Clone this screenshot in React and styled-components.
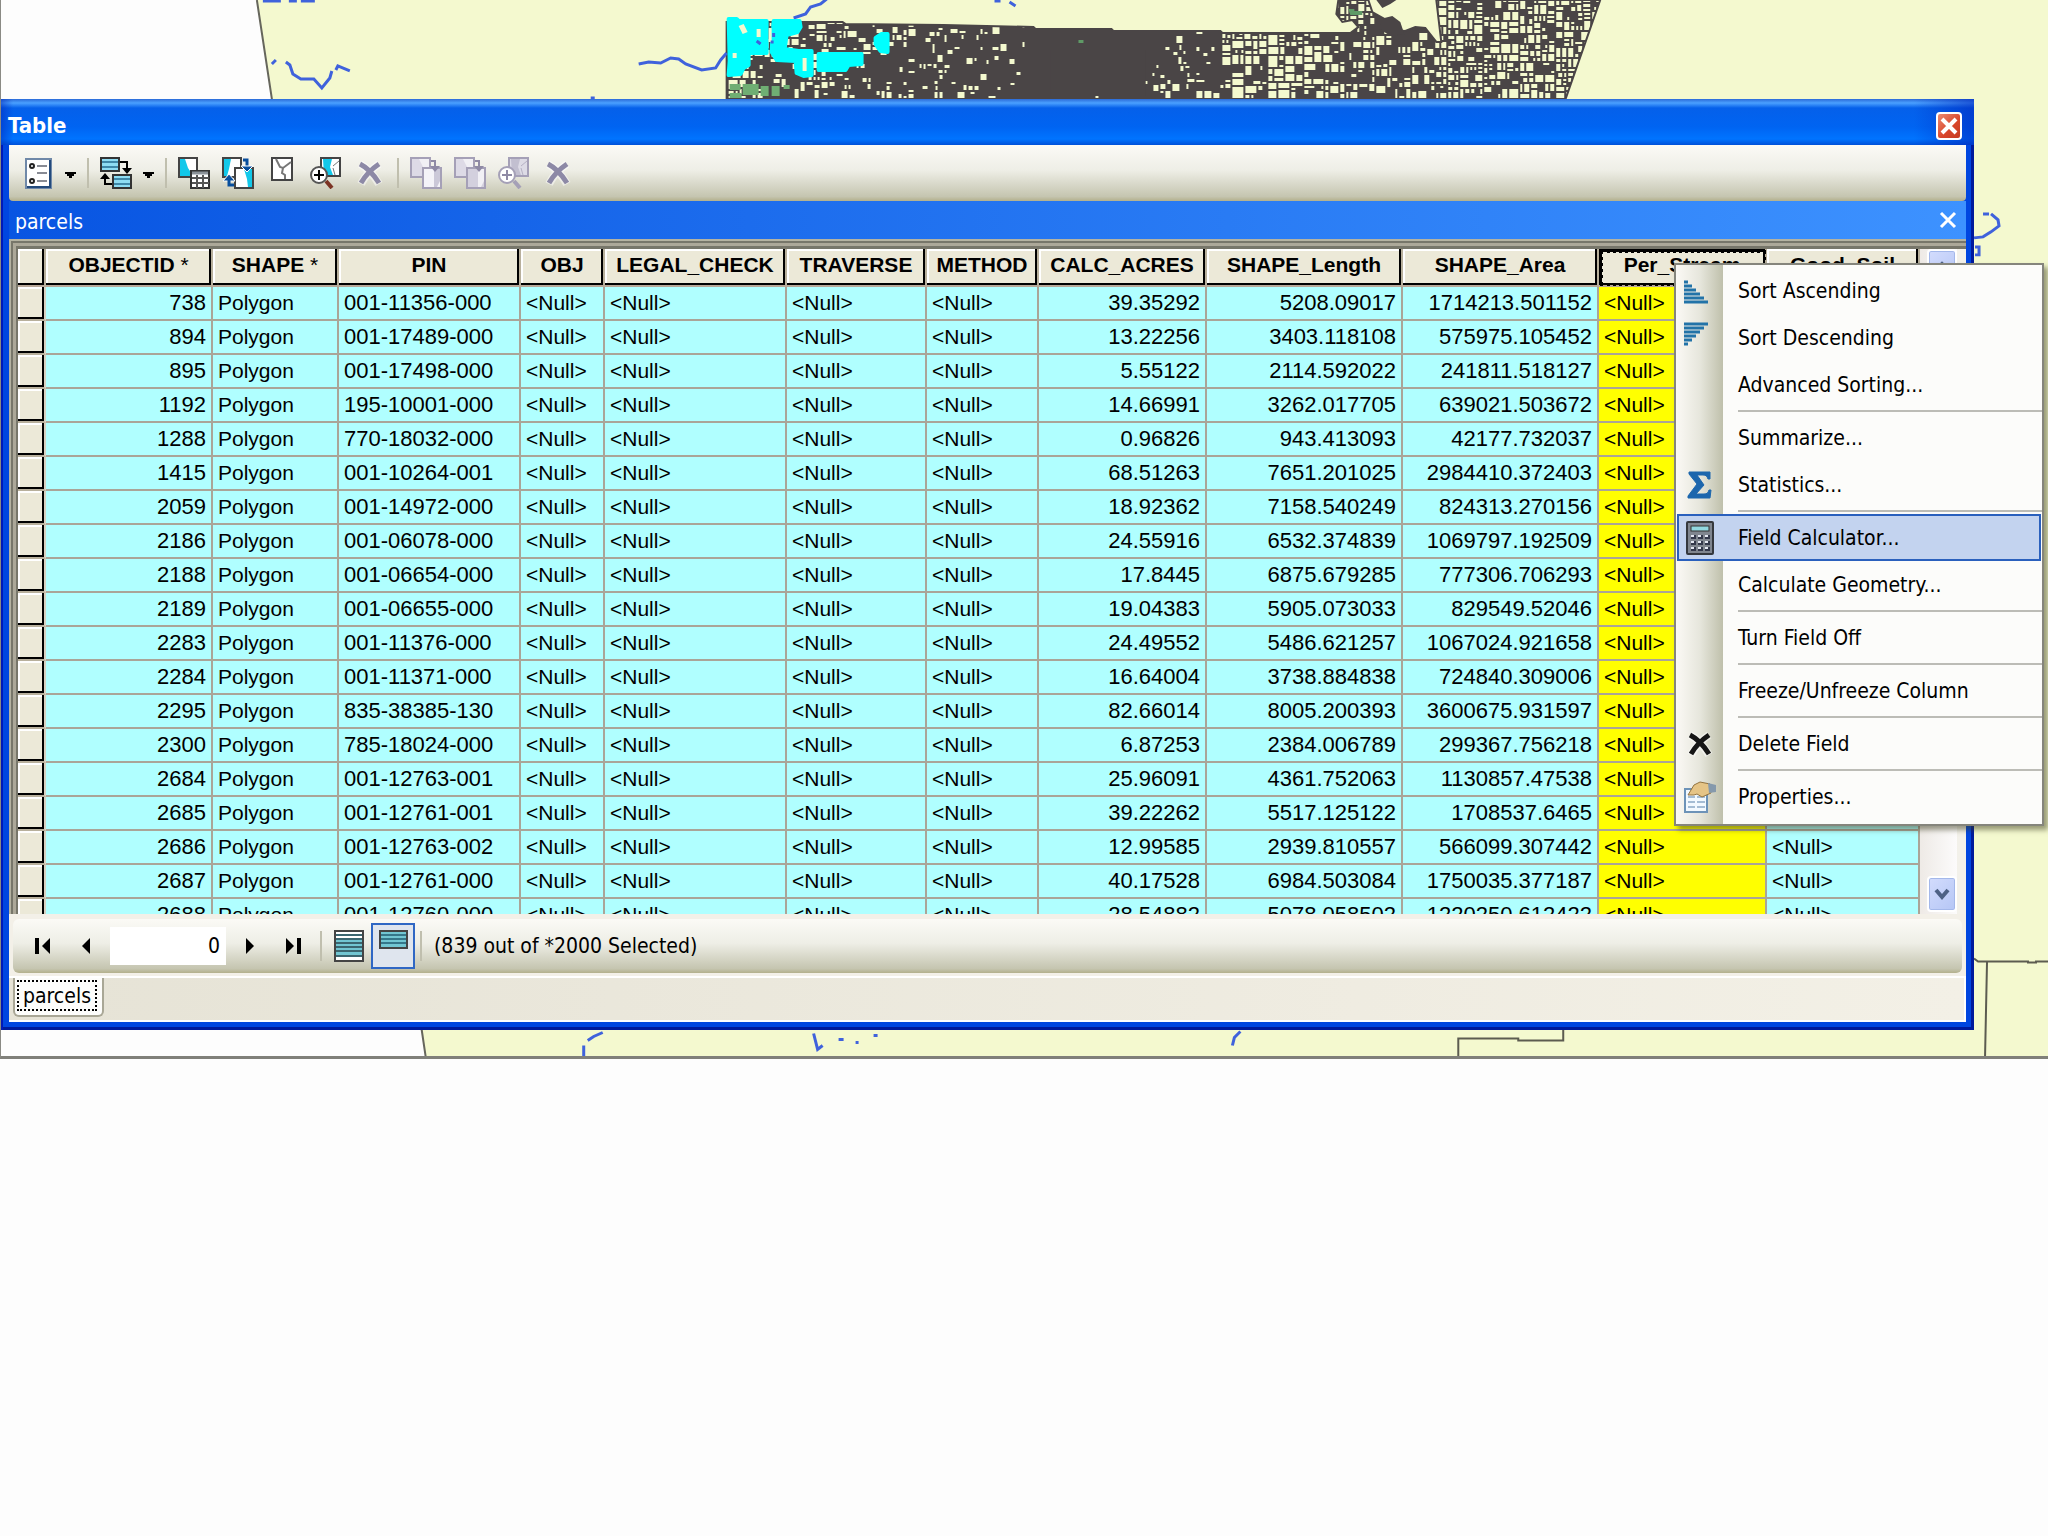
// src/App.jsx

import React from 'react';
import styled, { createGlobalStyle, css } from 'styled-components';

const uiFont = "'DejaVu Sans Condensed', 'Noto Sans', sans-serif";
const gridFont = "'Liberation Sans', Arial, sans-serif";

const GlobalStyle = createGlobalStyle`
  * { box-sizing: border-box; }
  body {
    margin: 0;
    background: #fdfdfd;
    color: #000;
    font-family: ${uiFont};
    font-size: 21px;
  }
  button, input {
    font: inherit;
    color: inherit;
  }
`;

/**
 * Map view behind the floating table window
 */
const MapView = styled.main`
  position: relative;
  overflow: hidden;
  padding: 99px 74px 26px 0;
  border-left: 1px solid #8a8a84;
  border-bottom: 3px solid #80807a;
`;

const MapDrawing = styled.svg`
  position: absolute;
  top: 0;
  left: 0;
  width: 100%;
  height: 100%;
`;

/**
 * Floating window
 */
const Window = styled.section`
  position: relative;
  padding: 0 8px 8px 8px;
  background: #0046e0;
  box-shadow: inset 2px 0 0 #0019b8, inset -3px -3px 0 #001a9c;
`;

const TitleBar = styled.header`
  display: flex;
  align-items: center;
  justify-content: space-between;
  height: 46px;
  margin: 0 -8px;
  padding: 7px 12px 0 7px;
  background:
    linear-gradient(90deg, rgba(0, 40, 190, 0.5), transparent 12px calc(100% - 60px), rgba(0, 40, 190, 0.6)),
    linear-gradient(#2b6ad8 0, #4aa0ff 4px, #0560ea 9px, #0064f2 28px, #0074ff 40px, #0050d8 46px);
`;

const Title = styled.h1`
  margin: 0;
  color: #fff;
  font-size: 22px;
  line-height: 28px;
`;

const CloseButton = styled.button`
  display: flex;
  width: 26px;
  height: 28px;
  padding: 0;
  align-items: center;
  justify-content: center;
  border: 2px solid #fff;
  border-radius: 4px;
  background: linear-gradient(135deg, #ec8a70, #d8452a 60%, #c53b20);
`;

const barBackground = css`
  background: linear-gradient(#fbfaf6, #eeeee6 45%, #c5c5b0 92%, #b3b08c);
`;

const Toolbar = styled.div`
  display: flex;
  align-items: center;
  height: 56px;
  padding: 0 7px;
  border-radius: 0 0 4px 4px;
  ${barBackground}
`;

const ToolButton = styled.button`
  display: flex;
  width: 44px;
  height: 46px;
  padding: 0;
  align-items: center;
  justify-content: center;
  border: 2px solid ${({ $active }) => ($active ? '#2f67c4' : 'transparent')};
  background: ${({ $active }) => ($active ? '#dfe5ee' : 'transparent')};
`;

const CaretButton = styled(ToolButton)`
  width: 22px;
  padding-right: 3px;
`;

const Separator = styled.span`
  width: 2px;
  height: 30px;
  margin: 0 5px;
  background: #c0bfae;
`;

/**
 * Name strip of the open table
 */
const LayerBar = styled.div`
  display: flex;
  height: 38px;
  padding: 3px 8px 0 6px;
  align-items: center;
  justify-content: space-between;
  background: linear-gradient(90deg, #0855e2, #3d92ff);
`;

const LayerName = styled.h2`
  margin: 0;
  color: #fff;
  font-size: 21px;
  font-weight: 400;
`;

const PlainButton = styled.button`
  display: flex;
  padding: 0 0 4px;
  border: 0;
  background: none;
`;

/**
 * Attribute grid
 */
const GridFrame = styled.div`
  display: flex;
  height: 675px;
  padding: 10px 9px 0 9px;
  background: #f3f1ea;
  box-shadow:
    inset 2px 2px 0 #b5b3a2,
    inset 4px 4px 0 #77766a,
    inset 7px 7px 0 #aca899,
    inset 9px 10px 0 #77766a;
`;

const GridViewport = styled.div`
  flex: 1;
  overflow: hidden;
`;

const Grid = styled.table`
  width: 100%;
  table-layout: fixed;
  border-collapse: separate;
  border-spacing: 0;
  font-family: ${gridFont};
  font-size: 21px;
`;

const Column = styled.col`
  width: ${({ $width }) => ($width ? `${$width}px` : 'auto')};
`;

const HeaderCell = styled.th`
  height: 38px;
  padding: 0 4px 5px;
  border-right: 2px solid #b8b09c;
  border-bottom: 2px solid #b8a898;
  background: #ece9d8;
  box-shadow: inset -2px -2px 0 #000, inset 2px 2px 0 #fff;
  line-height: 24px;
  text-align: center;
  white-space: nowrap;
  ${({ $current }) =>
    $current &&
    css`
      outline: 3px dotted #000;
      outline-offset: -4px;
      box-shadow: inset -2px -2px 0 #000, inset 3px 3px 0 #000;
    `}
`;

const Star = styled.span`
  font-weight: 400;
`;

const RowHandle = styled.th`
  height: 34px;
  border-right: 2px solid #d8d2c2;
  border-bottom: 2px solid #b8b09c;
  background: #ece9d8;
  box-shadow: inset -2px -2px 0 #000, inset 2px 2px 0 #fff;
`;

const Cell = styled.td`
  height: 34px;
  padding: 0 5px 1px;
  border-right: 2px solid #aaa598;
  border-bottom: 2px solid #aaa598;
  background: ${({ $current }) => ($current ? '#ffff00' : '#b0ffff')};
  font-size: ${({ $digits }) => ($digits ? 22 : 21)}px;
  line-height: 26px;
  text-align: ${({ $align }) => $align || 'left'};
  white-space: nowrap;
`;

const Scrollbar = styled.div`
  display: flex;
  width: 37px;
  padding: 0 0 2px 7px;
  flex-direction: column;
  justify-content: space-between;
  background: linear-gradient(90deg, #eeeae6, #fcfbfb);
`;

const ScrollButton = styled.button`
  display: flex;
  width: 30px;
  height: 36px;
  padding: 0;
  align-items: center;
  justify-content: center;
  border: 2px solid #fff;
  border-radius: 4px;
  background: linear-gradient(135deg, #d3dcfd, #b5c6f5);
  box-shadow: inset 0 0 0 1px #a4b8ea;
`;

/**
 * Record navigation under the grid
 */
const StatusBar = styled.footer`
  display: flex;
  height: 62px;
  padding: 5px 4px 3px;
  background: #f3f0e8;
`;

const StatusTools = styled.div`
  display: flex;
  flex: 1;
  padding: 0 8px;
  align-items: center;
  border-radius: 6px;
  ${barBackground}
`;

const RecordInput = styled.input`
  width: 116px;
  height: 38px;
  margin: 0 1px;
  padding: 0 6px;
  border: 0;
  background: #fff;
  text-align: right;
`;

const SelectionCount = styled.p`
  margin: 0 7px;
`;

const TabStrip = styled.nav`
  height: 46px;
  padding: 0 4px;
  border-top: 2px solid #fff;
  border-right: 2px solid #fff;
  border-bottom: 2px solid #fff;
  background: linear-gradient(90deg, #e6e3d6, #f3f0e6);
`;

const Tab = styled.button`
  height: 39px;
  padding: 1px 5px 3px 2px;
  border: 2px solid #a9a796;
  border-top: 0;
  border-radius: 0 0 6px 6px;
  background: #fdfdfb;
`;

const TabLabel = styled.span`
  display: block;
  height: 31px;
  padding: 0 4px;
  border: 2px dotted #000;
  line-height: 29px;
`;

/**
 * Column context menu, lies over the grid
 */
const Menu = styled.ul`
  position: absolute;
  top: 263px;
  right: 4px;
  width: 370px;
  margin: 0;
  padding: 2px 1px 4px;
  border: 2px solid #85857c;
  background: linear-gradient(90deg, #fbf9f5, #e6e6dc 24px, #bfc0ab 47px, #fcfcfa 47px);
  box-shadow: 4px 4px 5px rgba(60, 60, 30, 0.5);
  list-style: none;
`;

const MenuItem = styled.button`
  display: flex;
  width: 100%;
  height: 47px;
  padding: 0;
  align-items: center;
  border: 2px solid ${({ $active }) => ($active ? '#2a60bd' : 'transparent')};
  background: ${({ $active }) => ($active ? '#c3d3ef' : 'transparent')};
  text-align: left;
`;

const MenuIcon = styled.span`
  display: flex;
  width: 42px;
  margin-right: 17px;
  justify-content: center;
`;

const MenuLine = styled.li`
  height: 2px;
  margin: 2px -1px 2px 61px;
  background: #bcbcb6;
`;

const Icon = ({ children, size = 32 }) => (
  <svg width={size} height={size} viewBox={`0 0 ${size} ${size}`} fill="none" aria-hidden="true">
    {children}
  </svg>
);

const CaretIcon = () => (
  <Icon size={14}>
    <path d="M2 6h11v2h-2v2H9v2H6v-2H4V8H2z" fill="#000" />
  </Icon>
);

const ListIcon = () => (
  <Icon>
    <path d="M4 2h25v29H4z" fill="#fff" stroke="#6f88a8" strokeWidth="2" />
    <path d="M28 3v27H5" stroke="#234a7c" strokeWidth="2" />
    <circle cx="10" cy="9" r="2" stroke="#222" strokeWidth="2" />
    <circle cx="10" cy="24" r="2" stroke="#222" strokeWidth="2" />
    <path d="M15 9h10M15 16h10M15 24h10" stroke="#888b94" strokeWidth="2" />
  </Icon>
);

const RelatedIcon = () => (
  <Icon>
    {[[1, 1], [13, 18]].map(([x, y]) => (
      <g key={x}>
        <path d={`M${x} ${y}h18v13H${x}z`} fill="#8edcf2" stroke="#333" strokeWidth="2" />
        <path d={`M${x + 1} ${y + 4}h16M${x + 1} ${y + 9}h16`} stroke="#3f88a8" strokeWidth="2" />
      </g>
    ))}
    <path d="M20 5h7v7M5 20v7h7" stroke="#000" strokeWidth="2" />
    <path d="M22 11h10l-5 6zM0 22h10l-5-6z" fill="#000" />
  </Icon>
);

const SelectByIcon = () => (
  <Icon>
    <path d="M1 1h18v19H1z" fill="#fff" stroke="#444" strokeWidth="2" />
    <path d="M2 2h5l3 9 2 3v5H2z" fill="#12c8ea" />
    <path d="M13 14h18v17H13z" fill="#fff" stroke="#333" strokeWidth="2" />
    <path d="M14 16h16" stroke="#8b9299" strokeWidth="3" />
    <path d="M14 21h17M14 26h17M19 18v13M25 18v13" stroke="#555" strokeWidth="2" />
  </Icon>
);

const SwitchSelectionIcon = () => (
  <Icon>
    <path d="M1 1h18v19H1z" fill="#fff" stroke="#444" strokeWidth="2" />
    <path d="M2 2h7l-2 10-2 7H2z" fill="#12c8ea" />
    <path d="M13 11h18v20H13z" fill="#fff" stroke="#444" strokeWidth="2" />
    <path d="M22 12h8v18h-4l-1-8z" fill="#12c8ea" />
    <path d="M21 3h4v6" stroke="#084e9d" strokeWidth="3" />
    <path d="M19 9h12l-6 6z" fill="#084e9d" stroke="#fff" />
    <path d="M1 24l6-7 6 7z" fill="#084e9d" stroke="#fff" />
    <path d="M7 22v6h5" stroke="#084e9d" strokeWidth="3" />
  </Icon>
);

const HighlightIcon = ({ shaded }) => (
  <Icon>
    <path d="M1 1h19v19H1z" fill="#dddae6" stroke="#a5a0b7" strokeWidth="2" />
    <path d="M9 2h10v8h-6z" fill="#f1f0f5" />
    <path d="M13 11h18v20H13z" fill={shaded ? '#d3d0de' : '#f4f3f8'} stroke="#a5a0b7" strokeWidth="2" />
    <path d="M24 12h6v12l-3 6h-3z" fill={shaded ? '#f1f0f5' : '#cbc8d8'} />
    <path d="M21 4h4v6" stroke="#8f8aa5" strokeWidth="2" />
    <path d="M20 9h10l-5 6z" fill="#8f8aa5" />
  </Icon>
);

const ClearIcon = () => (
  <Icon>
    <path d="M6 1h20v22H6z" fill="#fff" stroke="#444" strokeWidth="2" />
    <path d="M10 2l4 8 3 1 8-6M17 11l-1 5 3 2v4" stroke="#777" strokeWidth="2" />
  </Icon>
);

const ZoomIcon = ({ disabled }) => (
  <Icon>
    <path d="M11 1h19v18H11z" fill={disabled ? '#dddbe6' : '#fff'} stroke={disabled ? '#a5a0b7' : '#444'} strokeWidth="2" />
    <path d="M13 2h9l-2 8 3 8h-9z" fill={disabled ? '#c2bfd0' : '#12c8ea'} />
    <path d="M23 9l6-5M25 18l-2-7" stroke={disabled ? '#b5b1c4' : '#777'} />
    <path d="M16 24l6 7" stroke={disabled ? '#a5a0b7' : '#7c3324'} strokeWidth="4" />
    <circle cx="9" cy="18" r="8" fill="#fff" stroke={disabled ? '#a5a0b7' : '#555'} strokeWidth="2" />
    <path d="M4 18h10M9 13v10" stroke={disabled ? '#8f8aa5' : '#000'} strokeWidth="2" />
  </Icon>
);

const CrossIcon = ({ color }) => (
  <Icon>
    <path d="M6 7c6 3 14 11 19 20M25 7C19 11 11 19 7 27" stroke="#fff" strokeWidth="8" opacity="0.5" />
    <path d="M6 7c6 3 14 11 19 19M25 7C19 11 11 19 7 26" stroke={color} strokeWidth="5" />
  </Icon>
);

const CloseIcon = ({ size = 20, width = 4 }) => (
  <Icon size={size}>
    <path d={`M3 3L${size - 3} ${size - 3}M${size - 3} 3L3 ${size - 3}`} stroke="#fff" strokeWidth={width} />
  </Icon>
);

const StepIcon = ({ end, back }) => (
  <Icon>
    <g transform={back ? 'matrix(-1 0 0 1 32 0)' : undefined}>
      <path d={end ? 'M9 8v16l8-8z' : 'M13 8v16l8-8z'} fill="#000" />
      {end && <path d="M20 8h4v16h-4z" fill="#000" />}
    </g>
  </Icon>
);

const AllRecordsIcon = () => (
  <Icon>
    <path d="M2 1h28v30H2z" fill="#fff" stroke="#444" strokeWidth="2" />
    <path d="M3 9h26v17H3z" fill="#72c6d2" />
    <path d="M3 5h26M3 9h26M3 13h26M3 17h26M3 21h26M3 26h26" stroke="#3b6670" strokeWidth="2" />
  </Icon>
);

const SelectedRecordsIcon = () => (
  <Icon>
    <path d="M3 1h27v17H3z" fill="#72c6d2" stroke="#444" strokeWidth="2" />
    <path d="M4 5h25M4 9h25M4 13h25" stroke="#35778a" strokeWidth="2" />
  </Icon>
);

const SortIcon = ({ descending }) => (
  <Icon>
    {[4, 8, 12, 16, 20, 24].map((w, i) => (
      <path key={w} d={`M0 ${descending ? 22 - i * 4 : 7 + i * 4}h${w}`} stroke="#2273a8" strokeWidth="3" />
    ))}
  </Icon>
);

const SigmaIcon = () => (
  <Icon>
    <path d="M5 3h21v7h-2c-1-3-2-4-5-4h-6l7 10-8 9h8c3 0 4-1 5-4h2l-1 8H4v-2l9-12L5 5z" fill="#1c66ad" stroke="#1c66ad" />
  </Icon>
);

const CalculatorIcon = () => (
  <svg width="30" height="36" viewBox="0 0 30 36" aria-hidden="true">
    <rect x="2" y="2" width="26" height="32" rx="1" fill="#80868f" stroke="#35383d" strokeWidth="2" />
    <rect x="6" y="6" width="18" height="5" fill="#92d8e0" stroke="#333" />
    {[0, 1, 2].map((row) =>
      [0, 1, 2].map((col) => (
        <g key={`${row}${col}`}>
          <rect x={6 + col * 7} y={15 + row * 6} width="5" height="4" fill="#33384a" />
          <rect x={6 + col * 7} y={15 + row * 6} width="3" height="2" fill="#e4e8f2" />
        </g>
      ))
    )}
  </svg>
);

const PropertiesIcon = () => (
  <Icon>
    <path d="M1 8h22v23H1z" fill="#f2f9ff" stroke="#6d93b8" strokeWidth="2" />
    <path d="M4 16h7M13 16h8M4 21h7M13 21h8M4 26h7M13 26h8" stroke="#a4bcd4" strokeWidth="2" />
    <path d="M4 14L10 4l6-3 10 2 1 9-9 4-5-3-3 1z" fill="#e5c486" stroke="#93733f" />
    <path d="M24 2l8 2v7l-7 1z" fill="#8599ac" />
  </Icon>
);

/**
 * Parcel fabric: the area is split again and again into lots,
 * dense blocks stay dark, open ones show the land colour
 */
const lotStyle = (x) => {
  if (x < 850) return { open: 0.55, size: 6 };
  if (x < 950) return { open: 0.4, size: 5 };
  if (x < 1030) return { open: 0.22, size: 5 };
  if (x < 1150) return { open: 0.04, size: 4 };
  if (x < 1220) return { open: 0.3, size: 5 };
  if (x < 1330) return { open: 0.75, size: 7 };
  if (x < 1430) return { open: 0.6, size: 6 };
  return { open: 0.88, size: 6 };
};

const buildLots = () => {
  let seed = 20117;
  const random = () => {
    seed = (seed * 16807) % 2147483647;
    return seed / 2147483647;
  };
  const lots = [];
  const split = (x, y, w, h) => {
    const { open, size } = lotStyle(x);
    const small = w < size * 2 && h < size * 2;
    if ((small && random() < 0.6) || w < 5 || h < 5) {
      if (random() < open && w > 3 && h > 3) lots.push(`M${x} ${y}h${w - 2}v${h - 2}h${2 - w}z`);
      return;
    }
    const cut = 0.3 + random() * 0.4;
    if (w > h) {
      const left = Math.round(w * cut);
      split(x, y, left, h);
      split(x + left, y, w - left, h);
    } else {
      const top = Math.round(h * cut);
      split(x, y, w, top);
      split(x, y + top, w, h - top);
    }
  };
  for (let x = 728; x < 1610; x += 36) split(x, 0, 36, 100);
  return lots.join('');
};

const lotsPath = buildLots();
const parcelOutline =
  '726,22 842,22 845,24 943,25 1033,27 1035,29 1111,29 1113,31 1220,31 1222,33 1350,33 1358,27 1352,20 1342,22 1336,14 1338,0 1368,0 1372,12 1386,20 1391,30 1405,31 1415,27 1425,28 1436,42 1441,42 1436,0 1600,0 1565,100 726,100';

const Backdrop = () => (
  <MapDrawing viewBox="0 0 2048 1058" preserveAspectRatio="xMinYMin slice" aria-hidden="true">
    <clipPath id="parcels">
      <polygon points={parcelOutline} />
    </clipPath>
    <path d="M256 0L271 99 421 1031 425 1058H2048V0z" fill="#f4f9cf" />
    <path d="M256 0L271 99 421 1031 425 1058" stroke="#66665c" strokeWidth="2" fill="none" />
    <polygon points={parcelOutline} fill="#4a4546" />
    <path d={lotsPath} fill="#f4f9cf" clipPath="url(#parcels)" />
    <polygon points={parcelOutline} fill="none" stroke="#4a4546" strokeWidth="2" />
    <path d="M1376 0l6 8 8-4 6-4M1384 18l8-2 8 6 4 12-14 2-12-8z" fill="#4a4546" />
    <path d="M1050 50h95v46h-95z" fill="#4a4546" />
    <path d="M729 84h11v6h-11zM742 84h16v11h-16zM760 86h8v10h-8zM729 93h12v5h-12zM771 86h8v10h-8zM783 85h6v4h-6z" fill="#6fae73" />
    <path d="M1348 9h6v2h8v4h-12zM1078 40h5v3h-5z" fill="#5f9a66" />
    <g fill="none" stroke="#3f62dc" strokeWidth="3">
      <path d="M271 64l4-4M285 62l4 3 3 9 8 5h13l8 9 8-10 2-7M335 70l2-4 12 5" />
      <path d="M638 64l10-2 12 1 10-5 8 1 7 5 16 6 14-2 5-8 6-7M793 18l12-4 5-7 10-3 6-5M262 1h18M288 1h8M300 1h14M994 1h6M1009 2l6 4M590 98h4" />
      <path d="M1974 238l9-1 8-5 8-6-1-6-7-6M1983 214h6M1975 247h4v8h-4" />
      <path d="M583 1058v-12M587 1041l6-4 9-4M813 1034l4 16 5-4M838 1040h5M855 1043h3M873 1036h4M1232 1046l2-8 6-6" />
    </g>
    <g fill="#00ffff" stroke="#00ffff" strokeWidth="4" strokeLinejoin="round">
      <path d="M728 19h8l2 2h28v32h-18v12l-5 3-3 6-12 1 1-14z" />
      <path d="M773 21h26l1 6-3 5-11 3-2 14 14 2h13v24l-8 1-7-3-1-12-19-1-5-8z" />
      <path d="M818 54h43v10l-13 1-3 5h-27zM875 38l6-4h6v18l-7-1-5-7z" />
    </g>
    <path d="M738 26l5-2 4 8-5 2zM756 29h4v8h-4zM732 53h4v5h-4zM802 58h4v13h-4zM768 28h3v14h-3z" fill="#f4f9cf" />
    <path d="M756 41l4 3M770 42h3M773 33v4" stroke="#3f62dc" strokeWidth="3" />
    <g fill="none" stroke="#5c5c50" strokeWidth="2">
      <path d="M1974 959l4 3h50v1h8v-1h12M1987 962l-2 96M1458 1058v-19h60v2h45v-12" />
    </g>
  </MapDrawing>
);

const columns = [
  { name: 'OBJECTID', star: true, width: 167, align: 'right', digits: true },
  { name: 'SHAPE', star: true, width: 126 },
  { name: 'PIN', width: 182, digits: true },
  { name: 'OBJ', width: 84 },
  { name: 'LEGAL_CHECK', width: 182 },
  { name: 'TRAVERSE', width: 140 },
  { name: 'METHOD', width: 112 },
  { name: 'CALC_ACRES', width: 168, align: 'right', digits: true },
  { name: 'SHAPE_Length', width: 196, align: 'right', digits: true },
  { name: 'SHAPE_Area', width: 196, align: 'right', digits: true },
  { name: 'Per_Stream', width: 168, current: true },
  { name: 'Good_Soil' },
];

const parcels = [
  ['738', '001-11356-000', '39.35292', '5208.09017', '1714213.501152'],
  ['894', '001-17489-000', '13.22256', '3403.118108', '575975.105452'],
  ['895', '001-17498-000', '5.55122', '2114.592022', '241811.518127'],
  ['1192', '195-10001-000', '14.66991', '3262.017705', '639021.503672'],
  ['1288', '770-18032-000', '0.96826', '943.413093', '42177.732037'],
  ['1415', '001-10264-001', '68.51263', '7651.201025', '2984410.372403'],
  ['2059', '001-14972-000', '18.92362', '7158.540249', '824313.270156'],
  ['2186', '001-06078-000', '24.55916', '6532.374839', '1069797.192509'],
  ['2188', '001-06654-000', '17.8445', '6875.679285', '777306.706293'],
  ['2189', '001-06655-000', '19.04383', '5905.073033', '829549.52046'],
  ['2283', '001-11376-000', '24.49552', '5486.621257', '1067024.921658'],
  ['2284', '001-11371-000', '16.64004', '3738.884838', '724840.309006'],
  ['2295', '835-38385-130', '82.66014', '8005.200393', '3600675.931597'],
  ['2300', '785-18024-000', '6.87253', '2384.006789', '299367.756218'],
  ['2684', '001-12763-001', '25.96091', '4361.752063', '1130857.47538'],
  ['2685', '001-12761-001', '39.22262', '5517.125122', '1708537.6465'],
  ['2686', '001-12763-002', '12.99585', '2939.810557', '566099.307442'],
  ['2687', '001-12761-000', '40.17528', '6984.503084', '1750035.377187'],
  ['2688', '001-12760-000', '28.54882', '5078.058502', '1220250.612422'],
];

const toCells = ([id, pin, acres, length, area]) => [
  id, 'Polygon', pin, '<Null>', '<Null>', '<Null>', '<Null>', acres, length, area, '<Null>', '<Null>',
];

const menuItems = [
  { label: 'Sort Ascending', icon: <SortIcon /> },
  { label: 'Sort Descending', icon: <SortIcon descending /> },
  { label: 'Advanced Sorting...', lineAfter: true },
  { label: 'Summarize...' },
  { label: 'Statistics...', icon: <SigmaIcon />, lineAfter: true },
  { label: 'Field Calculator...', icon: <CalculatorIcon />, active: true },
  { label: 'Calculate Geometry...', lineAfter: true },
  { label: 'Turn Field Off', lineAfter: true },
  { label: 'Freeze/Unfreeze Column', lineAfter: true },
  { label: 'Delete Field', icon: <CrossIcon color="#151515" />, lineAfter: true },
  { label: 'Properties...', icon: <PropertiesIcon /> },
];

export default function App() {
  return (
    <>
      <GlobalStyle />
      <MapView>
        <Backdrop />
        <Window>
          <TitleBar>
            <Title>Table</Title>
            <CloseButton aria-label="Close window"><CloseIcon /></CloseButton>
          </TitleBar>

          <Toolbar>
            <ToolButton aria-label="Table options"><ListIcon /></ToolButton>
            <CaretButton aria-label="More table options"><CaretIcon /></CaretButton>
            <Separator />
            <ToolButton aria-label="Related tables"><RelatedIcon /></ToolButton>
            <CaretButton aria-label="More related tables"><CaretIcon /></CaretButton>
            <Separator />
            <ToolButton aria-label="Select by attributes"><SelectByIcon /></ToolButton>
            <ToolButton aria-label="Switch selection"><SwitchSelectionIcon /></ToolButton>
            <ToolButton aria-label="Clear selection"><ClearIcon /></ToolButton>
            <ToolButton aria-label="Zoom to selected"><ZoomIcon /></ToolButton>
            <ToolButton aria-label="Delete selected" disabled><CrossIcon color="#8d89a6" /></ToolButton>
            <Separator />
            <ToolButton aria-label="Select highlighted" disabled><HighlightIcon /></ToolButton>
            <ToolButton aria-label="Unselect highlighted" disabled><HighlightIcon shaded /></ToolButton>
            <ToolButton aria-label="Zoom to highlighted" disabled><ZoomIcon disabled /></ToolButton>
            <ToolButton aria-label="Delete highlighted" disabled><CrossIcon color="#8d89a6" /></ToolButton>
          </Toolbar>

          <LayerBar>
            <LayerName>parcels</LayerName>
            <PlainButton aria-label="Close table"><CloseIcon width={3} /></PlainButton>
          </LayerBar>

          <GridFrame>
            <GridViewport>
              <Grid>
                <colgroup>
                  <Column $width={28} />
                  {columns.map((c) => <Column key={c.name} $width={c.width} />)}
                </colgroup>
                <thead>
                  <tr>
                    <HeaderCell aria-label="Row" />
                    {columns.map((c) => (
                      <HeaderCell key={c.name} scope="col" $current={c.current}>
                        {c.name}
                        {c.star && <Star> *</Star>}
                      </HeaderCell>
                    ))}
                  </tr>
                </thead>
                <tbody>
                  {parcels.map((row) => (
                    <tr key={row[0]}>
                      <RowHandle scope="row" aria-label={row[0]} />
                      {toCells(row).map((value, idx) => (
                        <Cell
                          key={columns[idx].name}
                          $align={columns[idx].align}
                          $digits={columns[idx].digits}
                          $current={columns[idx].current}
                        >
                          {value}
                        </Cell>
                      ))}
                    </tr>
                  ))}
                </tbody>
              </Grid>
            </GridViewport>
            <Scrollbar>
              <ScrollButton aria-label="Scroll up">
                <Icon size={18}><path d="M3 12l6-6 6 6" stroke="#4d6185" strokeWidth="4" /></Icon>
              </ScrollButton>
              <ScrollButton aria-label="Scroll down">
                <Icon size={18}><path d="M3 5l6 7 6-7" stroke="#4d6185" strokeWidth="4" /></Icon>
              </ScrollButton>
            </Scrollbar>
          </GridFrame>

          <StatusBar>
            <StatusTools>
              <ToolButton aria-label="First record"><StepIcon end back /></ToolButton>
              <ToolButton aria-label="Previous record"><StepIcon back /></ToolButton>
              <RecordInput aria-label="Record number" defaultValue="0" />
              <ToolButton aria-label="Next record"><StepIcon /></ToolButton>
              <ToolButton aria-label="Last record"><StepIcon end /></ToolButton>
              <Separator />
              <ToolButton aria-label="Show all records"><AllRecordsIcon /></ToolButton>
              <ToolButton aria-label="Show selected records" $active><SelectedRecordsIcon /></ToolButton>
              <Separator />
              <SelectionCount>(839 out of *2000 Selected)</SelectionCount>
            </StatusTools>
          </StatusBar>

          <TabStrip>
            <Tab><TabLabel>parcels</TabLabel></Tab>
          </TabStrip>
        </Window>

        {/* Column menu */}
        <Menu role="menu">
          {menuItems.map((item) => (
            <React.Fragment key={item.label}>
              <li role="none">
                <MenuItem role="menuitem" $active={item.active}>
                  <MenuIcon>{item.icon}</MenuIcon>
                  {item.label}
                </MenuItem>
              </li>
              {item.lineAfter && <MenuLine role="separator" />}
            </React.Fragment>
          ))}
        </Menu>
      </MapView>
    </>
  );
}
